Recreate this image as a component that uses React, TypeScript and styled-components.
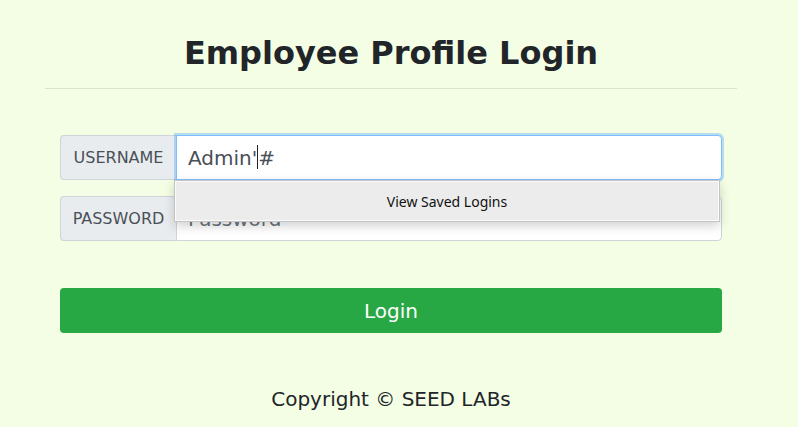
import React from "react";
import styled, { createGlobalStyle } from "styled-components";

const Global = createGlobalStyle`
  html, body { margin: 0; padding: 0; }
  body {
    background: #f3fee4;
    font-family: "DejaVu Sans", sans-serif;
    color: #212529;
  }
`;

const Page = styled.div`
  width: 782px;
  padding-top: 33px;
`;

const Container = styled.div`
  width: 692px;
  margin: 0 auto;
`;

const Title = styled.h1`
  margin: 0;
  font-size: 32px;
  line-height: 40px;
  font-weight: bold;
  text-align: center;
  color: #212529;
`;

const Rule = styled.hr`
  margin: 15px 0 0;
  border: 0;
  border-top: 1px solid rgba(0, 0, 0, 0.1);
`;

const Form = styled.div`
  position: relative;
  padding: 46px 15px 0;
  display: flex;
  flex-direction: column;
  gap: 16px;
`;

const Group = styled.div`
  display: flex;
  height: 45px;
`;

const Addon = styled.div`
  width: 116px;
  box-sizing: border-box;
  display: flex;
  align-items: center;
  justify-content: center;
  background: #e9ecef;
  border: 1px solid #ced4da;
  border-right: 0;
  border-radius: 4px 0 0 4px;
  color: #495057;
  font-size: 16px;
`;

const Field = styled.div<{ $focused?: boolean }>`
  flex: 1;
  box-sizing: border-box;
  display: flex;
  align-items: center;
  padding: 0 11px;
  background: #fff;
  border: 1px solid ${(p) => (p.$focused ? "#80bdff" : "#ced4da")};
  border-radius: 0 4px 4px 0;
  box-shadow: ${(p) => (p.$focused ? "0 0 0 2px rgba(0,123,255,0.25)" : "none")};
  font-size: 20px;
  color: #495057;
  position: relative;
  z-index: ${(p) => (p.$focused ? 1 : 0)};
`;

const Placeholder = styled.span`
  color: #6c757d;
`;

const Caret = styled.span`
  display: inline-block;
  width: 1px;
  height: 24px;
  background: #222;
  margin: 0 0 -4px;
  vertical-align: baseline;
`;

const Dropdown = styled.div`
  position: absolute;
  left: 129px;
  top: 91px;
  width: 546px;
  height: 42px;
  box-sizing: border-box;
  background: #ececec;
  border: 1px solid #c4c4c4;
  box-shadow: inset 0 0 0 1px #fafafa, 0 4px 10px rgba(0, 0, 0, 0.18);
  display: flex;
  align-items: center;
  justify-content: center;
  font-family: "Noto Sans", "Open Sans", sans-serif;
  font-size: 14px;
  color: #111;
  z-index: 2;
`;

const Button = styled.button`
  margin-top: 31px;
  height: 45px;
  border: 0;
  border-radius: 4px;
  background: #28a745;
  color: #fff;
  font-family: "DejaVu Sans", sans-serif;
  font-size: 20px;
  cursor: pointer;
`;

const Footer = styled.p`
  margin: 54px 0 0;
  text-align: center;
  font-size: 20px;
  color: #212529;
`;

export default function App() {
  return (
    <>
      <Global />
      <Page>
        <Container>
          <Title>Employee Profile Login</Title>
          <Rule />
          <Form>
            <Group>
              <Addon>USERNAME</Addon>
              <Field $focused>
                <span>
                  Admin'
                  <Caret />#
                </span>
              </Field>
            </Group>
            <Group>
              <Addon>PASSWORD</Addon>
              <Field>
                <Placeholder>Password</Placeholder>
              </Field>
            </Group>
            <Dropdown>View Saved Logins</Dropdown>
            <Button>Login</Button>
          </Form>
          <Footer>Copyright © SEED LABs</Footer>
        </Container>
      </Page>
    </>
  );
}
